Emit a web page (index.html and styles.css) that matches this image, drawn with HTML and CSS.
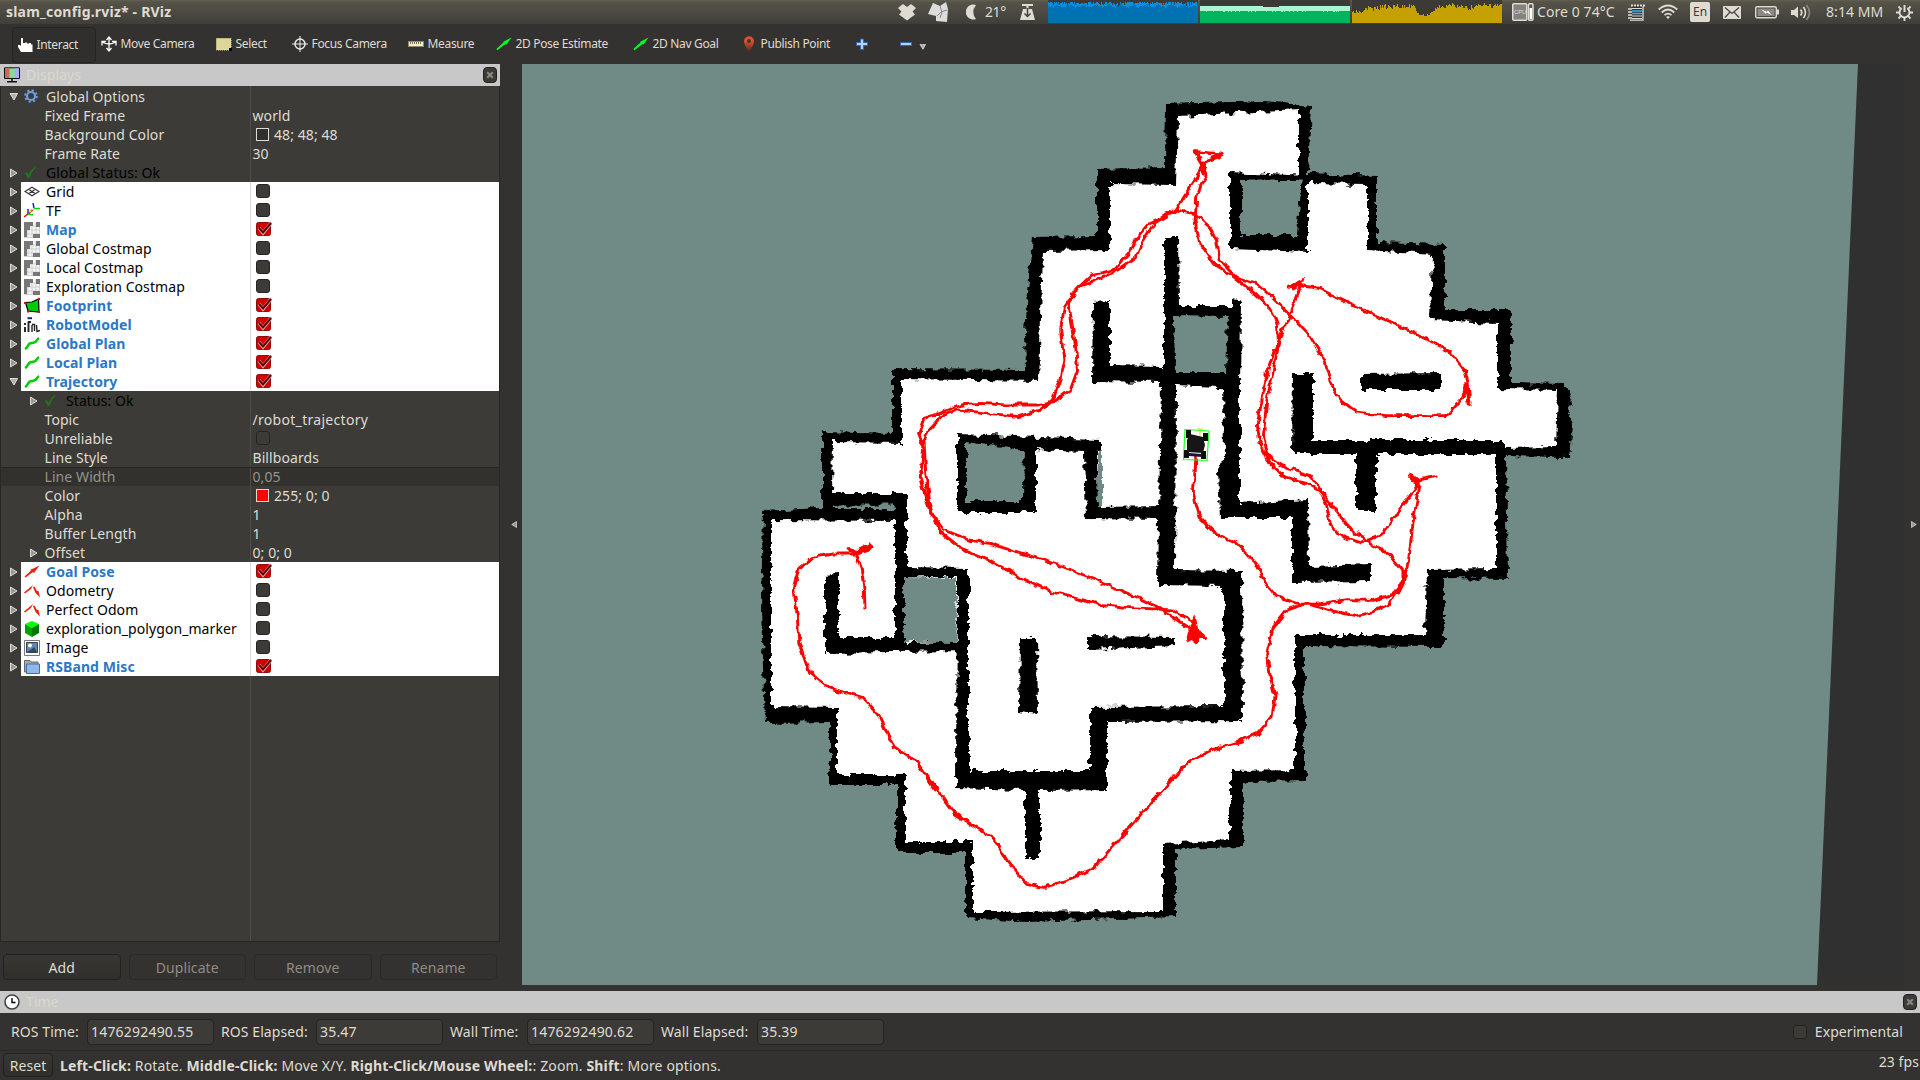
FILE: index.html
```html
<!DOCTYPE html>
<html lang="en">
<head>
<meta charset="utf-8">
<title>slam_config.rviz* - RViz</title>
<link rel="stylesheet" href="styles.css">
</head>
<body>
<svg class="defs" width="0" height="0" aria-hidden="true">
  <defs>
    <symbol id="i-gear" viewBox="0 0 16 16"><circle cx="7" cy="7" r="4" fill="none" stroke="#6d9bdc" stroke-width="2.2"/><circle cx="7" cy="7" r="5.800" fill="none" stroke="#6d9bdc" stroke-width="2" stroke-dasharray="2.2 2.35"/></symbol>
    <symbol id="i-check" viewBox="0 0 16 16"><path d="M1 8 L2.5 7 L4.5 10 Q7 4 12.5 1 Q8 6 5 13 L4 13 Z" fill="#1e7a1e"/></symbol>
    <symbol id="i-grid" viewBox="0 0 16 16"><path d="M1 7.5 L8 3.2 L15 7.5 L8 11.8 Z M4.5 5.3 L11.5 9.7 M11.5 5.3 L4.5 9.7" fill="none" stroke="#333" stroke-width="1.1"/></symbol>
    <symbol id="i-tf" viewBox="0 0 16 16" fill="none" stroke-width="1.5"><path d="M0 14 L4 11" stroke="#f00"/><path d="M4 11 L4 6 M10 5 L9 0" stroke="#22c"/><path d="M4 11 L9 12 M10 5.5 L16 5.5" stroke="#0d0"/><path d="M5 10.5 L9.5 6" stroke="#f00" stroke-dasharray="2 1"/><path d="M5 9 L8 6" stroke="#ec2"/></symbol>
    <symbol id="i-map" viewBox="0 0 16 16"><path d="M0 0H16V16H0Z" fill="#f4f4f4"/><path d="M4 0V16M8 0V16M12 0V16M0 4H16M0 8H16M0 12H16M15.5 0V16M0 15.5H16" stroke="#c4c4c4" stroke-width=".7"/><path d="M0 0H9V4H6V8H3V15H0ZM12 0H16V5H12ZM9 12H16V16H9Z" fill="#777"/></symbol>
    <symbol id="i-foot" viewBox="0 0 16 16"><path d="M1.5 4.5 L8 4 L14.5 1 L15 14 L4 13 Z" fill="#0c0" stroke="#000" stroke-width="1.2"/><path d="M0 4h2v2H0zM14 0h2v2h-2zM14 13h2v2h-2zM3 12.500h2v2H3z" fill="#f00"/></symbol>
    <symbol id="i-robot" viewBox="0 0 16 16"><path d="M3.500 1.200h4.500" stroke="#226" stroke-width="2"/><path d="M1 6V8M1 10V15M4.500 4.500V15M4 5h3" fill="none" stroke="#222" stroke-width="1.900"/><path d="M8 15V8M8 7.500h2.500V14M12.500 8l.5 6.500 3-1" fill="none" stroke="#222" stroke-width="1.400"/></symbol>
    <symbol id="i-path" viewBox="0 0 16 16"><path d="M1 13 C5 11 3 7 8 7 S12 4 15 2" fill="none" stroke="#0c0" stroke-width="2.500"/></symbol>
    <symbol id="i-pose" viewBox="0 0 16 16"><path d="M0.500 12.500 L7 6.500 L6 6 L15.500 1.500 L10 9 L9 8 L1.500 13.500 Z" fill="#f02010"/></symbol>
    <symbol id="i-odom" viewBox="0 0 16 16"><path d="M0 9.500 L9 2 L7 6 L1 10.500Z M9 4 L10.500 3.500 L13 8 L14.500 8 L16 14.500 L11.500 10Z" fill="#f02010"/></symbol>
    <symbol id="i-cube" viewBox="0 0 16 16"><path d="M8 0 L15 3 L8 7 L1 3Z" fill="#0f0"/><path d="M1 3 L8 7 V16 L1 12Z" fill="#00a000"/><path d="M15 3 L8 7 V16 L15 12Z" fill="#007800"/></symbol>
    <symbol id="i-image" viewBox="0 0 16 16"><path d="M.5 .5H15.500V15.500H.5Z" fill="#fff" stroke="#777"/><path d="M2.500 2.500H13.500V12.500H2.500Z" fill="#5f86b4" stroke="#345"/><circle cx="6" cy="5.500" r="2" fill="#ffd"/><path d="M3 12 L8 9 L10 7 L13 12Z" fill="#345"/></symbol>
    <symbol id="i-folder" viewBox="0 0 16 16"><path d="M.5 1.500H6L7 3H14V13H.5Z" fill="#aaa" stroke="#666"/><path d="M2.500 5H15.500V14.500H2.500Z" fill="#8fb7e8" stroke="#3f6fae"/></symbol>
    <symbol id="i-arrow" viewBox="0 0 16 16"><path d="M.3 13 L7.500 6.500 L7 6 L15.500 1.500 L10.500 8.500 L9.500 8 L1.500 14.300Z" fill="#0f2"/></symbol>
    <symbol id="i-right" viewBox="0 0 8 10"><path d="M.5 1 L7 5 L.5 9Z" fill="#999" stroke="#dfdbd2" stroke-width="1"/></symbol>
    <symbol id="i-down" viewBox="0 0 10 8"><path d="M1 .5 H8.500 L5 7Z" fill="#b5b2aa" stroke="#dfdbd2" stroke-width="1"/></symbol>
    <symbol id="i-tick" viewBox="0 0 16 16"><rect x=".5" y="1.500" width="14" height="13" rx="2" fill="#d40000" stroke="#8b0d0d"/><path d="M3 7 L7 12 L15.500 1.500" fill="none" stroke="#f3a0a0" stroke-width="3.400"/><path d="M3 7 L7 11.500 L15 2" fill="none" stroke="#4a0c0c" stroke-width="2"/></symbol>
    <filter id="rough" x="0" y="0" width="100%" height="100%" color-interpolation-filters="sRGB"><feTurbulence type="fractalNoise" baseFrequency=".11 .14" numOctaves="3" seed="4"/><feDisplacementMap in="SourceGraphic" scale="9" xChannelSelector="R" yChannelSelector="G"/></filter>
    <filter id="wobble" x="0" y="0" width="100%" height="100%" color-interpolation-filters="sRGB"><feTurbulence type="fractalNoise" baseFrequency=".12" numOctaves="2" seed="11"/><feDisplacementMap in="SourceGraphic" scale="6" xChannelSelector="R" yChannelSelector="G"/></filter>
  </defs>
</svg>

<header class="panel">
  <div class="title">slam_config.rviz* - RViz</div>
  <div class="tray">
    <svg width="18" height="18" viewBox="0 0 18 18"><path d="M5 1L9 4L13 1L18 5L14.500 8.500L17 11.500L9 17.500L1 11.500L3.500 8.500L0 5Z" fill="#dfdbd2"/></svg>
    <svg width="22" height="22" viewBox="0 0 22 22"><path d="M5 2L12 5L18 1L20 8L19 21L8 20L8 15L0 13Z" fill="#dcdcdc"/><path d="M9 15L13 11L19 9M12 5L14 11L12 17" stroke="#888" fill="none"/></svg>
    <svg width="12" height="18" viewBox="0 0 12 18"><path d="M10 2A7.500 7.500 0 1 0 10 16Q4.500 9 10 2Z" fill="#dfdbd2"/></svg>
    <span class="lite">21°</span>
    <svg width="15" height="18" viewBox="0 0 15 18"><path d="M2 2H13M7.500 2V8" stroke="#dfdbd2" stroke-width="2"/><path d="M3 6H12L15 17H0Z" fill="#dfdbd2"/><path d="M7.500 5V13M4.500 10.500L7.500 13.500L10.500 10.500" stroke="#444" fill="none" stroke-width="1.500"/></svg>
    <svg class="graph" id="cpu" width="150" height="23"></svg>
    <svg class="graph" id="mem" width="150" height="23"></svg>
    <svg class="graph" id="net" width="150" height="23"></svg>
    <svg width="22" height="18" viewBox="0 0 22 18"><rect x=".75" y=".75" width="14" height="16.500" rx="1" fill="#85827b" stroke="#dfdbd2" stroke-width="1.500"/><rect x="16.500" y=".75" width="4.500" height="16.500" rx="1" fill="#555" stroke="#dfdbd2" stroke-width="1.500"/><path d="M17.500 5h2.500v11h-2.500z" fill="#fff"/><text x="2" y="11" class="cpu">CPU</text></svg>
    <span>Core 0 74°C</span>
    <svg width="17" height="17" viewBox="0 0 17 17"><path d="M4 2H15V16H3Z" fill="#333"/><path d="M4 4.500H14M4 12H14M4 14.500H14" stroke="#dfdbd2" stroke-width="1.200"/><path d="M4 7H14M4 9.500H14" stroke="#39b5e8" stroke-width="1.700"/><path d="M3 1.500H17" stroke="#dfdbd2" stroke-width="2" stroke-dasharray="2 1"/><path d="M15 2V16.200H2" fill="none" stroke="#dfdbd2" stroke-width="1.300"/><path d="M0 5H4M0 8H4M0 11H4M0 14H4" stroke="#dfdbd2" stroke-width="1.500"/></svg>
    <svg width="20" height="16" viewBox="0 0 20 16" fill="none" stroke="#dfdbd2" stroke-width="1.800"><path d="M.7 5.500Q10-2.500 19.300 5.500M3.700 8.500Q10 2.500 16.300 8.500M6.500 11.200Q10 8 13.500 11.200"/><path d="M8 13L10 15L12 13L10 12Z" fill="#dfdbd2" stroke="none"/></svg>
    <span class="lang">En</span>
    <svg width="18" height="13" viewBox="0 0 18 13"><rect width="18" height="13" rx="1" fill="#dfdbd2"/><path d="M2 1.500L9 7.500L16 1.500M2 11.500L7 6M16 11.500L11 6" stroke="#45443e" fill="none" stroke-width="1.200"/></svg>
    <svg width="24" height="14" viewBox="0 0 24 14"><rect x=".7" y="1.700" width="20.600" height="11" rx="1.500" fill="none" stroke="#dfdbd2" stroke-width="1.400"/><rect x="2.500" y="3.500" width="17" height="7.500" fill="#8d8a83"/><path d="M22 4.500h2v5h-2z" fill="#dfdbd2"/><path d="M5 3.500L12 6.500L12.500 4.500L18 11L11.500 8L11 9.500Z" fill="#fff" stroke="#555" stroke-width=".5"/></svg>
    <svg width="20" height="17" viewBox="0 0 20 17"><path d="M0 6H3L7 2.500V14L3 11H0Z" fill="#dfdbd2"/><g fill="none" stroke="#dfdbd2" stroke-width="1.700"><path d="M9.500 5.500Q12 8.500 9.500 11.500"/><path d="M12.500 3Q16.500 8.500 12.500 14"/><path d="M15.500 1Q21.500 8.500 15.500 16" stroke="#88857d"/></g></svg>
    <span>8:14 ΜΜ</span>
    <svg width="17" height="17" viewBox="0 0 17 17"><g fill="none" stroke="#dfdbd2"><path d="M5.700 4.300A5 5 0 1 0 11.300 4.300" stroke-width="1.900"/><path d="M8.500 1V8" stroke-width="2"/><path d="M0 8.500H3.500M13.500 8.500H17M2.500 2.500L4.800 4.800M14.500 2.500L12.200 4.800M2.500 14.500L4.800 12.200M14.500 14.500L12.200 12.200M8.500 13.500V17" stroke-width="1.900"/></g></svg>
  </div>
</header>

<nav class="toolbar">
  <div class="tool active"><svg width="16" height="16" viewBox="0 0 16 16"><path d="M4 1H6V6H8V5.500H10V6.500H12V6H14V7.500H15.500V15H4L1 10V8H3L4 9Z" fill="#fff"/></svg><span>Interact</span></div>
  <div class="tool"><svg width="16" height="16" viewBox="0 0 16 16"><path d="M8 2V14M1 6Q8 10 15 6M5.500 4L8 1L10.500 4M5.500 12L8 15L10.500 12M1 9.500V5.500H5M15 9.500V5.500H11" fill="none" stroke="#fff" stroke-width="1.300"/></svg><span>Move Camera</span></div>
  <div class="tool"><svg width="16" height="16" viewBox="0 0 16 16"><path d="M.5 2.500H15V14H.5Z" fill="#dcd69a" stroke="#f5f0a0" stroke-dasharray="1 1"/><path d="M13 12h3v3h-3z" fill="#000"/></svg><span>Select</span></div>
  <div class="tool"><svg width="16" height="16" viewBox="0 0 16 16"><circle cx="8" cy="8" r="5" fill="none" stroke="#eee" stroke-width="1.400"/><path d="M8 0V16M0 8H16" stroke="#eee"/></svg><span>Focus Camera</span></div>
  <div class="tool"><svg width="16" height="16" viewBox="0 0 16 16"><path d="M0 5H16V11H0Z" fill="#8e8a78"/><path d="M1 6H15V10H1Z" fill="#f3eec6"/><path d="M2.500 6V8M4.500 6V8M6.500 6V8M8.500 6V8M10.500 6V8M12.500 6V8" stroke="#77705a"/></svg><span>Measure</span></div>
  <div class="tool"><svg width="16" height="16"><use href="#i-arrow"/></svg><span>2D Pose Estimate</span></div>
  <div class="tool"><svg width="16" height="16"><use href="#i-arrow"/></svg><span>2D Nav Goal</span></div>
  <div class="tool"><svg width="16" height="16" viewBox="0 0 16 16"><defs><linearGradient id="pin" x2="0" y2="1"><stop offset=".3" stop-color="#e0502c"/><stop offset="1" stop-color="#4a2c20"/></linearGradient></defs><path d="M8 .3A5 5 0 0 1 13 5.300Q13 9 8 16Q3 9 3 5.300A5 5 0 0 1 8 .3Z" fill="url(#pin)"/><circle cx="8" cy="5" r="1.900" fill="#333"/></svg><span>Publish Point</span></div>
  <div class="tool"><svg width="12" height="16" viewBox="0 0 12 16"><path d="M4.500 3H7.500V6.500H11.500V9.500H7.500V13.500H4.500V9.500H.5V6.500H4.500Z" fill="#b5d0f5" stroke="#3367b8"/></svg></div>
  <div class="tool"><svg width="12" height="16" viewBox="0 0 12 16"><path d="M.5 6.500H11.500V9.500H.5Z" fill="#b5d0f5" stroke="#3367b8"/></svg><svg class="more" width="8" height="6"><use href="#i-down"/></svg></div>
</nav>

<main class="work">
  <section class="displays">
    <div class="dock"><svg width="16" height="16" viewBox="0 0 16 16"><path d="M.5 .8H15.500V11.500H.5Z" fill="#8d8" stroke="#111"/><path d="M1 1.500H5.500V11H1Z" fill="#c66"/><path d="M10.500 1.500H15V11H10.500Z" fill="#aaf"/><path d="M8 12V14.500M3 14.800H13" stroke="#111" stroke-width="1.500"/></svg><span>Displays</span><i class="close"></i></div>
    <div class="tree">
      <div class="row"><svg class="ex dn"><use href="#i-down"/></svg><svg class="ic"><use href="#i-gear"/></svg><span class="n">Global Options</span></div>
      <div class="row p"><span class="n">Fixed Frame</span><span class="v">world</span></div>
      <div class="row p"><span class="n">Background Color</span><span class="v"><i class="sw"></i>48; 48; 48</span></div>
      <div class="row p"><span class="n">Frame Rate</span><span class="v">30</span></div>
      <div class="row st"><svg class="ex"><use href="#i-right"/></svg><svg class="ic"><use href="#i-check"/></svg><span class="n">Global Status: Ok</span></div>
      <div class="row d"><svg class="ex"><use href="#i-right"/></svg><svg class="ic"><use href="#i-grid"/></svg><span class="n">Grid</span><span class="v"><i class="cb"></i></span></div>
      <div class="row d"><svg class="ex"><use href="#i-right"/></svg><svg class="ic"><use href="#i-tf"/></svg><span class="n">TF</span><span class="v"><i class="cb"></i></span></div>
      <div class="row d on"><svg class="ex"><use href="#i-right"/></svg><svg class="ic"><use href="#i-map"/></svg><span class="n">Map</span><span class="v"><svg class="tk"><use href="#i-tick"/></svg></span></div>
      <div class="row d"><svg class="ex"><use href="#i-right"/></svg><svg class="ic"><use href="#i-map"/></svg><span class="n">Global Costmap</span><span class="v"><i class="cb"></i></span></div>
      <div class="row d"><svg class="ex"><use href="#i-right"/></svg><svg class="ic"><use href="#i-map"/></svg><span class="n">Local Costmap</span><span class="v"><i class="cb"></i></span></div>
      <div class="row d"><svg class="ex"><use href="#i-right"/></svg><svg class="ic"><use href="#i-map"/></svg><span class="n">Exploration Costmap</span><span class="v"><i class="cb"></i></span></div>
      <div class="row d on"><svg class="ex"><use href="#i-right"/></svg><svg class="ic"><use href="#i-foot"/></svg><span class="n">Footprint</span><span class="v"><svg class="tk"><use href="#i-tick"/></svg></span></div>
      <div class="row d on"><svg class="ex"><use href="#i-right"/></svg><svg class="ic"><use href="#i-robot"/></svg><span class="n">RobotModel</span><span class="v"><svg class="tk"><use href="#i-tick"/></svg></span></div>
      <div class="row d on"><svg class="ex"><use href="#i-right"/></svg><svg class="ic"><use href="#i-path"/></svg><span class="n">Global Plan</span><span class="v"><svg class="tk"><use href="#i-tick"/></svg></span></div>
      <div class="row d on"><svg class="ex"><use href="#i-right"/></svg><svg class="ic"><use href="#i-path"/></svg><span class="n">Local Plan</span><span class="v"><svg class="tk"><use href="#i-tick"/></svg></span></div>
      <div class="row d on"><svg class="ex dn"><use href="#i-down"/></svg><svg class="ic"><use href="#i-path"/></svg><span class="n">Trajectory</span><span class="v"><svg class="tk"><use href="#i-tick"/></svg></span></div>
      <div class="row st sub"><svg class="ex"><use href="#i-right"/></svg><svg class="ic"><use href="#i-check"/></svg><span class="n">Status: Ok</span></div>
      <div class="row p"><span class="n">Topic</span><span class="v wide">/robot_trajectory</span></div>
      <div class="row p"><span class="n">Unreliable</span><span class="v"><i class="cb"></i></span></div>
      <div class="row p"><span class="n">Line Style</span><span class="v">Billboards</span></div>
      <div class="row p sel"><span class="n">Line Width</span><span class="v">0,05</span></div>
      <div class="row p"><span class="n">Color</span><span class="v"><i class="sw red"></i>255; 0; 0</span></div>
      <div class="row p"><span class="n">Alpha</span><span class="v">1</span></div>
      <div class="row p"><span class="n">Buffer Length</span><span class="v">1</span></div>
      <div class="row sub"><svg class="ex"><use href="#i-right"/></svg><span class="n">Offset</span><span class="v">0; 0; 0</span></div>
      <div class="row d on"><svg class="ex"><use href="#i-right"/></svg><svg class="ic"><use href="#i-pose"/></svg><span class="n">Goal Pose</span><span class="v"><svg class="tk"><use href="#i-tick"/></svg></span></div>
      <div class="row d"><svg class="ex"><use href="#i-right"/></svg><svg class="ic"><use href="#i-odom"/></svg><span class="n">Odometry</span><span class="v"><i class="cb"></i></span></div>
      <div class="row d"><svg class="ex"><use href="#i-right"/></svg><svg class="ic"><use href="#i-odom"/></svg><span class="n">Perfect Odom</span><span class="v"><i class="cb"></i></span></div>
      <div class="row d"><svg class="ex"><use href="#i-right"/></svg><svg class="ic"><use href="#i-cube"/></svg><span class="n">exploration_polygon_marker</span><span class="v"><i class="cb"></i></span></div>
      <div class="row d"><svg class="ex"><use href="#i-right"/></svg><svg class="ic"><use href="#i-image"/></svg><span class="n">Image</span><span class="v"><i class="cb"></i></span></div>
      <div class="row d on"><svg class="ex"><use href="#i-right"/></svg><svg class="ic"><use href="#i-folder"/></svg><span class="n">RSBand Misc</span><span class="v"><svg class="tk"><use href="#i-tick"/></svg></span></div>
    </div>
    <div class="grip"></div>
    <div class="buttons"><button class="ok">Add</button><button>Duplicate</button><button>Remove</button><button>Rename</button></div>
  </section>
  <div class="handle"><svg class="flip" width="6" height="9"><use href="#i-right"/></svg></div>

  <svg class="view" viewBox="522 64 1382 921" width="1382" height="921">
    <rect x="522" y="64" width="1382" height="921" fill="#303030"/>
    <path d="M522 64H1858L1817 985H522Z" fill="#708a85"/>
    <g filter="url(#rough)">
      <path fill="#000" d="M1166 104L1265 101L1311 106L1308 173L1377 176V242L1445 244V309L1511 309V383L1567 384L1572 402L1568 413L1573 424L1570 457L1506 456L1508 579L1444 578V647L1305 646V781L1243 782V847L1176 849V917L1026 922L966 918V853L897 853V785L830 785V722L765 723L761 610L763 511L822 508V431L892 433V369L1026 370L1025 333L1032 237L1097 236V169L1165 167Z"/>
      <path fill="#fff" d="M1178 116L1299 110V176H1308V183L1367 184V250L1433 254L1431 320L1497 323V389L1558 390L1556 447L1504 448L1496 453V569L1427 570L1425 635L1295 635V770L1230 771V840L1163 844V911L973 912V842L905 842V775H837V707L771 706V520L900 521L899 493H832L833 442L902 443V379L1039 381L1043 251L1110 250V184L1176 185Z"/>
      <path fill="#708a85" d="M834 505.500H896V509H834ZM1098 450H1102V508H1098Z"/>
      <g fill="#000">
        <path d="M1230 172L1308 176V252L1230 249ZM1164 237H1179L1180 306H1233V299L1241 301L1240 388L1176 385L1175 570L1242 571L1243 721L1107 722V789L1040 790V858H1025V790L956 788L957 577H907V643L958 642V651L825 653V575L838 574V638H895V493H907V567L969 568V771L1090 771V707L1224 706V586L1158 585L1161 382L1092 381L1093 302L1110 301V365L1164 366Z"/>
        <path d="M1223 380H1240V503L1308 499L1309 566L1371 564V582L1292 583V518L1220 518L1218 470L1224 460Z"/>
        <path d="M957 434L1101 439V450L1097 452L1098 507L1162 506V519L1086 518L1084 452L1036 450V513L957 513Z"/>
        <path d="M1293 373H1313V440L1504 440V454H1376V512H1356V453H1292ZM1361 374L1441 373V390H1361ZM1088 636L1175 637V646L1088 650ZM1020 637L1037 637L1038 714L1019 712Z"/>
      </g>
      <path fill="#708a85" d="M1241 180H1302L1297 235H1241ZM1174 316L1228 317L1226 373H1175ZM966 442L1024 450L1023 501H966ZM904 577L956 578V643L904 642Z"/>
    </g>
    <path d="M1240 177.500H1303" stroke="#000" stroke-width="4"/>
    <g class="track" filter="url(#wobble)">
      <rect class="extent" x="522" y="64" width="1382" height="921"/>
      <g transform="translate(740 80) scale(.35714 .33333)">
        <path d="M525 1255L505 1190L515 1100L500 1060L515 1015L560 1000L620 975L670 970L750 975L830 975L880 965L925 930L945 870L940 800L925 700L920 665L950 620L1000 600L1060 570L1110 530L1130 480L1160 430L1220 390L1250 340L1280 290L1295 250L1275 215L1350 222L1300 245"/>
        <path d="M530 1255L520 1180L515 1080L530 1050L570 1005L610 990L700 1000L780 1010L840 990L875 960L895 900L907 840L898 750L908 680L940 630L985 585L1050 568L1090 520L1105 480L1145 430L1220 392"/>
      </g>
      <g transform="translate(1140 80) scale(.33333 .38265)">
        <path d="M165 188L250 195L190 215L198 250L185 270L170 310L165 370L180 430L220 480L275 510L340 555L395 600L412 640L415 680L395 730L375 780L365 840L352 900L360 950L390 1000L430 1035L500 1055L540 1075L560 1110L570 1160L600 1190L665 1210L730 1185L780 1120L835 1060L810 1030L835 1045L895 1035"/>
        <path d="M495 520L445 542L485 535L450 615L420 670L400 760L380 840L370 930L385 985L440 1015L515 1035L550 1080L590 1130L640 1180L700 1215L750 1240L795 1290L775 1340L700 1360L620 1358L530 1370L480 1370L410 1350L380 1320L345 1260L290 1210L225 1185L180 1145L160 1080L168 990"/>
        <path d="M110 340L165 350L210 385L230 420L240 470L290 515L355 535L410 580L450 615L510 670L555 735L570 790L600 835L650 868L740 877L920 877L965 830L980 800L988 850L984 790L975 760L930 710L820 660L660 597L540 545L480 537"/>
        <path d="M810 1030L840 1060L820 1150L805 1260L790 1310L745 1370L700 1390L650 1400L560 1385L500 1368L440 1385L400 1430L380 1500L384 1535"/>
        <path class="thick" d="M792 1280L792 1305L770 1345M980 790L987 845M455 541L485 532M812 1033L835 1055M188 225L197 245"/>
      </g>
      <g transform="translate(740 480) scale(.35714 .33333)">
        <path d="M1478 540L1485 590L1498 650L1490 710L1450 760L1400 785L1320 810L1250 850L1200 910L1100 1030L990 1165L930 1195L850 1222L800 1210L750 1145L710 1075L600 1000L545 920L500 850L430 800L390 710L345 655L240 620L195 580L165 490L160 400L150 320L165 265L200 232L260 222L320 222L365 195M300 203L325 218L340 270L348 330L350 385"/>
        <path d="M505 0L530 90L570 150L640 180L700 190L850 240L1000 300L1170 380L1250 440L1270 460"/>
        <path d="M525 0L528 70L560 155L620 205L690 235L780 290L870 335L1000 372L1080 382L1210 390L1270 425L1275 455"/>
        <path class="thick" d="M305 208L330 218L350 212L367 195M525 890L550 930"/>
        <path class="fill" d="M1276 410L1282 452L1300 473L1284 473L1279 486L1264 474L1250 482L1259 460Z"/>
      </g>
    </g>
    <path d="M1195.500 455V472" stroke="#f00" stroke-width="2.500"/>
    <path d="M1185 429.500L1209 431L1207 460.500L1183.500 459.500Z" fill="none" stroke="#2f2" stroke-width="1.200"/>
    <path d="M1186 430h5v8h-5zM1203 433h5v8h-5zM1184 450h5v8h-5zM1201 451h5v8h-5z" fill="#0c0c0c"/>
    <path d="M1190 434L1203 437L1205 445L1203 453L1187 452L1187 440Z" fill="#161616"/>
    <path d="M1189 453L1202 454V457L1189 456Z" fill="#151535"/>
    <path d="M1197 429h6M1200 429v7" stroke="#bd3" stroke-width="1"/>
  </svg>
  <div class="handle right"><svg width="6" height="9"><use href="#i-right"/></svg></div>
</main>

<section class="time">
  <div class="dock"><svg width="16" height="16" viewBox="0 0 16 16"><circle cx="8" cy="8" r="7" fill="#fff" stroke="#444" stroke-width="1.600"/><path d="M8 4V8.500H11.500" fill="none" stroke="#000" stroke-width="1.400"/></svg><span>Time</span><i class="close"></i></div>
  <div class="fields">
    <label>ROS Time:</label><span class="field">1476292490.55</span>
    <label>ROS Elapsed:</label><span class="field">35.47</span>
    <label>Wall Time:</label><span class="field">1476292490.62</span>
    <label>Wall Elapsed:</label><span class="field">35.39</span>
    <span class="exp"><i class="cb"></i>Experimental</span>
  </div>
</section>
<footer class="status">
  <button class="ok">Reset</button>
  <p><b>Left-Click:</b> Rotate. <b>Middle-Click:</b> Move X/Y. <b>Right-Click/Mouse Wheel:</b>: Zoom. <b>Shift</b>: More options.</p>
  <span class="fps">23 fps</span>
</footer>
<script src="graphs.js"></script>
</body>
</html>
```

FILE: graphs.js
```js
// System monitor graphs in the top panel: one 1px column per sample.
let seed = 5;
const rnd = () => (seed = (seed * 16807) % 2147483647) / 2147483647;

function area(id, fill, top) {
  let d = 'M0 23';
  for (let x = 0; x < 150; x++) d += `V${Math.round(top(x))}H${x + 1}`;
  const p = document.createElementNS('http://www.w3.org/2000/svg', 'path');
  p.setAttribute('d', d + 'V23Z');
  p.setAttribute('fill', fill);
  document.getElementById(id).append(p);
}

function curve(points) {
  return x => {
    let i = 0;
    while (points[i + 1][0] < x) i++;
    const [a, b] = points[i], [c, e] = points[i + 1];
    return b + (e - b) * (x - a) / (c - a);
  };
}

area('cpu', '#0b8ee0', () => 2 + rnd() * rnd() * 5);
area('cpu', '#0072b3', x => 5 + Math.sin(x / 2) + rnd() * 2);
area('mem', '#a8f5d0', x => (x > 62 && x < 79 ? 7 : 6));
area('mem', '#00b35c', () => 11.5 + (rnd() > .8 ? .3 : -.3));
const net = curve([[0, 13], [4, 11], [8, 14], [14, 8], [20, 9], [30, 7], [45, 6], [55, 7], [62, 5], [64, 12], [68, 15], [76, 15], [82, 10], [90, 6], [100, 5], [110, 7], [118, 8], [125, 6], [132, 5], [140, 6], [150, 5]]);
area('net', '#c4a000', x => net(x) + (rnd() - .5) * (x > 63 && x < 82 ? 1.5 : 5));
```

FILE: styles.css
```css
* { box-sizing: border-box; }
body { margin: 0; width: 1920px; height: 1080px; overflow: hidden; display: flex; flex-direction: column; background: #343230; color: #dfdbd2; font: 14px/19px "Noto Sans", sans-serif; letter-spacing: .08px; white-space: nowrap; }
svg { display: block; flex: none; }
i { display: block; flex: none; }
.defs { position: absolute; }

.panel { height: 24px; flex: none; display: flex; justify-content: space-between; background: linear-gradient(#62604f, #565449 2px, #3f3e39); }
.title { padding: 0 0 0 6px; font-weight: 700; font-size: 14px; line-height: 24px; letter-spacing: .2px; }
.tray { width: 1022px; display: grid; grid-template-columns: 30px 38px 19px 35px 28px 152px 152px 160px 25px 91px 30px 32px 33px 32px 36px 35px 70px 24px; align-items: center; }
.tray span { line-height: 24px; }
.tray .lite { font-size: 14px; letter-spacing: -.4px; }
.tray .lang { width: 20px; height: 20px; line-height: 20px; border-radius: 2px; background: #dfdbd2; color: #3c3b37; font-size: 12px; text-align: center; }
.graph { background: #3b3a36; align-self: start; }
.cpu { font: 6px "Liberation Sans", sans-serif; fill: #ddd; letter-spacing: -.2px; }

.toolbar { height: 40px; flex: none; display: grid; grid-template-columns: 84px 115px 76px 116px 88px 137px 108px 115px 44px 60px; padding-left: 17px; align-items: center; font-size: 12px; letter-spacing: -.33px; }
.tool { display: flex; gap: 4px; align-items: center; position: relative; height: 40px; padding-bottom: 1px; }
.tool span { margin-left: -.5px; }
.active::before { content: ""; position: absolute; left: -5px; top: 3px; width: 82px; height: 34px; border: 1px solid #252422; border-radius: 4px; background: #302f2d; }
.active svg, .active span { position: relative; top: 1px; }
.more { margin: 6px 0 0 3px; }

.work { height: 927px; flex: none; display: flex; align-items: flex-start; }
.displays { width: 500px; }
.dock { height: 22px; display: flex; align-items: center; padding: 0 3px 0 4px; gap: 6px; background: #c8c8c8; color: #dcd8cc; }
.dock span { margin-top: -1px; }
.close { margin-left: auto; width: 14px; height: 16px; border: 1px solid #222; border-radius: 4px; background: #3c3b37; position: relative; }
.close::before, .close::after { content: ""; position: absolute; left: 2px; top: 6px; width: 8px; height: 2px; background: #8b8881; transform: rotate(45deg); }
.close::after { transform: rotate(-45deg); }
.tree { height: 856px; border: 1px solid #282725; border-top: 0; background: linear-gradient(#4f4e4a, #4f4e4a) 249px 0 / 1px 100% no-repeat #3c3b37; padding-top: 1px; }
.row { height: 19px; display: grid; grid-template-columns: 20px 25px 206px 1fr; align-items: center; }
.row .n { grid-column: 3; line-height: 19px; }
.row .v { grid-column: 4; display: flex; align-items: center; height: 19px; padding-left: .5px; }
.row.p .n { margin-left: -1.500px; }
.wide { letter-spacing: .3px; }
.ex { grid-column: 1; grid-row: 1; width: 8px; height: 10px; margin-left: 8.500px; }
.ex.dn { width: 10px; height: 8px; margin-left: 7.500px; }
.ic { grid-column: 2; width: 16px; height: 16px; margin-left: 3px; }
.row.d { color: #000; background: linear-gradient(#ddd, #ddd) 249px 0 / 1px 100% no-repeat, linear-gradient(#fff, #fff) 20px 0 no-repeat; }
.row.on .n { color: #2b78c5; font-weight: 700; }
.row.st { color: #000; }
.row.sub { grid-template-columns: 40px 25px 186px 1fr; }
.row.sub .ex { margin-left: 28.500px; }
.row.sub:not(.st) .n { margin-left: -21.500px; }
.row.sel { background: linear-gradient(#4f4e4a, #4f4e4a) 249px 0 / 1px 100% no-repeat #32312e; color: #989388; box-shadow: inset 0 1px #282725; }
.cb { width: 14px; height: 14px; margin: 0 4px 0 3.500px; border: 1px solid #252422; border-radius: 3px; background: #3c3b37; }
.row .cb { position: relative; top: -.5px; }
.tk { width: 16px; height: 16px; margin: -1px 0 0 3.500px; }
.sw { width: 13px; height: 13px; border: 1px solid #dfdbd2; margin: 0 5px 0 3.500px; background: #303030; }
.sw.red { background: #f00; }
.grip { height: 12px; }
.buttons { display: flex; gap: 8px; padding-left: 3px; }
button { width: 117.500px; height: 26px; padding: 0; border: 1px solid #2b2a28; border-radius: 4px; background: #343230; color: #8f8b83; font: inherit; letter-spacing: inherit; }
button.ok { color: #dfdbd2; border-color: #222120; background: linear-gradient(#383633, #302f2c); }
.handle { width: 22px; height: 921px; display: flex; align-items: center; padding-left: 11px; }
.handle.right { width: 16px; padding-left: 7px; }
.flip { transform: scaleX(-1); }
.track { fill: none; stroke: #f00; stroke-width: 2.900; stroke-linejoin: round; }
.track path { vector-effect: non-scaling-stroke; }
.track .extent { stroke: none; }
.track .thick { stroke-width: 5; }
.track .fill { fill: #f00; }

.time { height: 60px; flex: none; border-bottom: 1px solid #2b2a28; }
.fields { display: flex; align-items: center; height: 37px; padding: 0 17px 0 11px; }
.fields label { width: 76px; }
.fields label:nth-of-type(2) { width: 95px; }
.fields label:nth-of-type(3) { width: 77px; }
.fields label:nth-of-type(4) { width: 96px; }
.field { width: 127px; height: 26px; margin-right: 7px; padding-left: 3px; line-height: 24px; border: 1px solid #242321; border-radius: 4px; background: #3c3b37; letter-spacing: .2px; }
.exp { margin-left: auto; display: flex; align-items: center; }
.exp .cb { margin: 0 8px 0 0; }
.status { height: 29px; display: flex; padding-left: 3px; }
.status button { width: 50px; height: 24px; margin-top: 2px; }
.status p { margin: 5px 0 0 7px; letter-spacing: .15px; }
.status .fps { margin: 1px 1px 0 auto; }
```
